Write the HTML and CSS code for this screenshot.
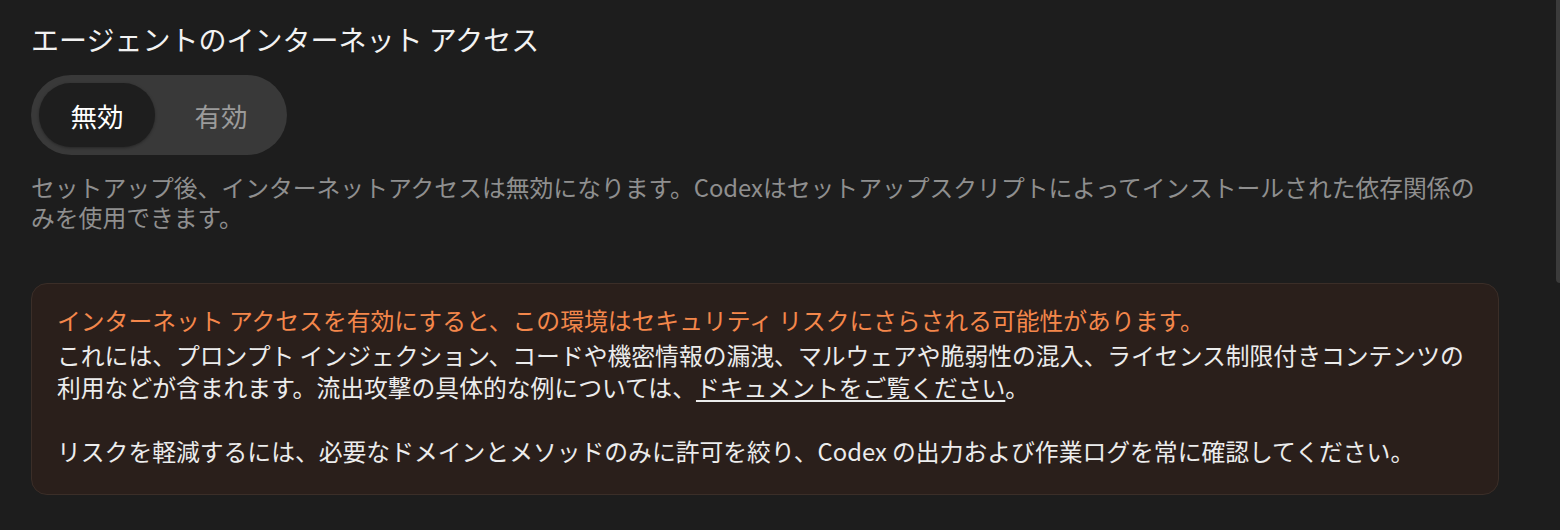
FILE: index.html
```html
<!DOCTYPE html>
<html lang="ja">
<head>
    <meta charset="UTF-8">
    <meta name="viewport" content="width=device-width, initial-scale=1.0">
    <title>エージェントのインターネット アクセス</title>
    <link rel="stylesheet" href="styles.css">
</head>
<body>
    <main class="ajustes">
        <h2 class="titulo">エージェントのインターネット アクセス</h2>

        <div class="alternar">
            <button class="opcao ativa">無効</button>
            <button class="opcao">有効</button>
        </div>

        <p class="descricao">セットアップ後、インターネットアクセスは無効になります。Codexはセットアップスクリプトによってインストールされた依存関係のみを使用できます。</p>

        <section class="aviso">
            <p class="aviso-titulo">インターネット アクセスを有効にすると、この環境はセキュリティ リスクにさらされる可能性があります。</p>
            <p>これには、プロンプト インジェクション、コードや機密情報の漏洩、マルウェアや脆弱性の混入、ライセンス制限付きコンテンツの利用などが含まれます。流出攻撃の具体的な例については、<a href="#">ドキュメントをご覧ください</a>。</p>
            <p>リスクを軽減するには、必要なドメインとメソッドのみに許可を絞り、Codex の出力および作業ログを常に確認してください。</p>
        </section>
    </main>

    <div class="barra-rolagem"></div>
</body>
</html>
```

FILE: styles.css
```css
body {
    font-family: "Noto Sans CJK JP", "Noto Sans", sans-serif;
    margin: 0;
    padding: 0;
    background-color: #1d1d1d;
    color: #ececec;
}

.ajustes {
    width: 1468px;
    padding: 21px 0 0 31px;
}

.titulo {
    font-size: 28px;
    font-weight: 400;
    line-height: 36px;
    color: #f2f2f2;
    margin: 0 0 18px;
}

/* seletor de duas opcoes */
.alternar {
    display: inline-flex;
    gap: 8px;
    padding: 8px;
    background-color: #393939;
    border-radius: 40px;
}

.opcao {
    width: 116px;
    height: 64px;
    border: none;
    border-radius: 32px;
    background: transparent;
    font-family: inherit;
    font-size: 26.5px;
    color: #9b9b9b;
    cursor: pointer;
}

.opcao.ativa {
    background-color: #1e1e1e;
    color: #ffffff;
    box-shadow: 0 1px 3px rgba(0, 0, 0, 0.35);
}

.descricao {
    max-width: 1450px;
    font-size: 23.8px;
    line-height: 30px;
    color: #8f8f8f;
    margin: 17px 0 0;
}

.aviso {
    margin-top: 51px;
    padding: 20px 20px 27px 25px;
    background-color: #2a1f1b;
    border: 1px solid #3b2e28;
    border-radius: 16px;
    font-size: 23.8px;
    line-height: 32px;
}

.aviso p {
    margin: 0 0 32px;
}

.aviso p:last-child {
    margin-bottom: 0;
}

.aviso .aviso-titulo {
    color: #f4874b;
    margin-bottom: 3px;
}

.aviso a {
    color: #ececec;
    text-decoration: underline;
    text-decoration-thickness: 2px;
    text-underline-offset: 3px;
}

.barra-rolagem {
    position: fixed;
    top: 0;
    right: 0;
    width: 4px;
    height: 283px;
    background-color: #3b3b3b;
    border-radius: 0 0 0 4px;
}
```
